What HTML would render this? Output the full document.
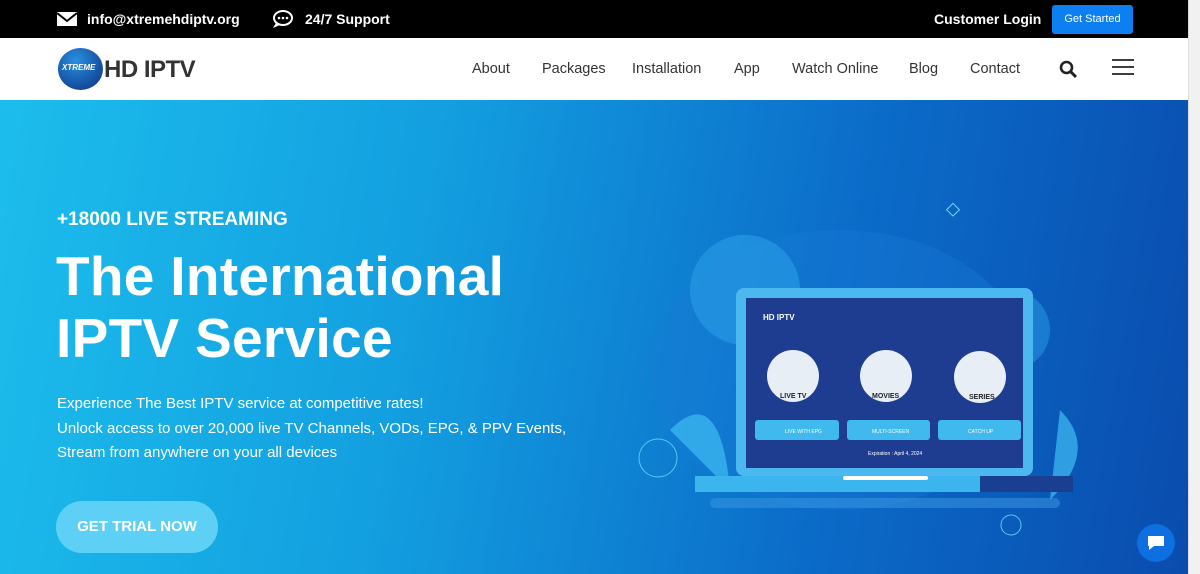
<!DOCTYPE html>
<html><head><style>
*{margin:0;padding:0;box-sizing:border-box}
body{width:1200px;height:574px;overflow:hidden;font-family:"Liberation Sans",sans-serif;position:relative;background:#fff}
.top{position:absolute;left:0;top:0;width:1188px;height:38px;background:#000;color:#fff;font-size:14px;font-weight:bold}
.nav{position:absolute;left:0;top:38px;width:1188px;height:62px;background:#fff}
.nav a{position:absolute;top:23px;font-size:14.5px;color:#333}
.hero{position:absolute;left:0;top:100px;width:1188px;height:474px;background:linear-gradient(100deg,#1cbdec 0%,#139fe0 35%,#0b6bc8 70%,#0a4cae 100%);color:#fff}
.sb{position:absolute;right:0;top:0;width:12px;height:574px;background:#f1f1f1;border-left:1px solid #ddd}
</style></head><body>
<div class="top">
<svg style="position:absolute;left:56px;top:11px" width="22" height="16"><rect x="1" y="1" width="20" height="14" fill="#fff"/><path d="M1 2 L11 10 L21 2" stroke="#000" stroke-width="2" fill="none"/></svg>
<span style="position:absolute;left:87px;top:11px">info@xtremehdiptv.org</span>
<svg style="position:absolute;left:271px;top:9px" width="24" height="20"><ellipse cx="12" cy="9" rx="9" ry="7" fill="none" stroke="#fff" stroke-width="2"/><path d="M5 14 L2 19 L9 16" fill="#fff"/><circle cx="8" cy="9" r="1.3" fill="#fff"/><circle cx="12" cy="9" r="1.3" fill="#fff"/><circle cx="16" cy="9" r="1.3" fill="#fff"/></svg>
<span style="position:absolute;left:305px;top:11px">24/7 Support</span>
<span style="position:absolute;left:934px;top:11px">Customer Login</span>
<div style="position:absolute;left:1052px;top:5px;width:81px;height:29px;background:#0d7ff0;border-radius:3px;font-size:11px;font-weight:normal;text-align:center;line-height:29px">Get Started</div>
</div>
<div class="nav">
<div style="position:absolute;left:58px;top:10px;width:45px;height:42px;border-radius:50%;background:radial-gradient(circle at 40% 30%,#2a8fe0,#0a2f80)"></div>
<span style="position:absolute;left:62px;top:25px;font-size:8px;color:#fff;font-style:italic;font-weight:bold">XTREME</span>
<span style="position:absolute;left:104px;top:18px;font-size:24px;font-weight:bold;color:#333;letter-spacing:-0.5px">HD IPTV</span>
<a style="left:472px">About</a><a style="left:542px">Packages</a><a style="left:632px">Installation</a><a style="left:734px">App</a><a style="left:792px">Watch Online</a><a style="left:909px">Blog</a><a style="left:970px">Contact</a>
<svg style="position:absolute;left:1059px;top:22px" width="19" height="19"><circle cx="7.5" cy="7.5" r="5.5" fill="none" stroke="#222" stroke-width="2.6"/><path d="M11.5 11.5 L17 17" stroke="#222" stroke-width="3"/></svg>
<svg style="position:absolute;left:1112px;top:21px" width="22" height="16"><path d="M0 1H22M0 8H22M0 15H22" stroke="#222" stroke-width="1.8"/></svg>
</div>
<div class="hero">
<div style="position:absolute;left:57px;top:109px;font-size:19px;font-weight:bold">+18000 LIVE STREAMING</div>
<div style="position:absolute;left:56px;top:145px;font-size:55px;font-weight:bold;line-height:62px;letter-spacing:0.3px">The International<br>IPTV Service</div>
<div style="position:absolute;left:57px;top:292px;font-size:15px;line-height:24.5px">Experience The Best IPTV service at competitive rates!<br>Unlock access to over 20,000 live TV Channels, VODs, EPG, &amp; PPV Events,<br>Stream from anywhere on your all devices</div>
<div style="position:absolute;left:56px;top:401px;width:162px;height:52px;border-radius:26px;background:#5fd0f5;font-size:15px;font-weight:bold;text-align:center;line-height:52px">GET TRIAL NOW</div>
<svg style="position:absolute;left:630px;top:80px" width="470" height="380">
<ellipse cx="210" cy="190" rx="190" ry="140" fill="#1a7bd6" opacity=".35"/>
<circle cx="115" cy="110" r="55" fill="#2a9ee6" opacity=".6"/>
<circle cx="380" cy="150" r="40" fill="#2a9ee6" opacity=".5"/>
<path d="M40 250 Q90 200 100 310 Z M430 230 Q470 270 420 320 Z" fill="#3fbdf2" opacity=".7"/>
<circle cx="28" cy="278" r="19" fill="none" stroke="#5ac8f0" stroke-width="1"/>
<circle cx="381" cy="345" r="10" fill="none" stroke="#5ac8f0" stroke-width="1"/>
<rect x="319" y="25" width="9" height="9" transform="rotate(45 323 29)" fill="none" stroke="#7ad6f6"/>
<rect x="106" y="108" width="297" height="188" rx="8" fill="#4cb8f0"/>
<rect x="116" y="118" width="277" height="170" fill="#1e3d90"/>
<text x="133" y="140" font-size="8" font-weight="bold" fill="#fff">HD IPTV</text>
<circle cx="163" cy="196" r="26" fill="#e8eef5"/><circle cx="256" cy="196" r="26" fill="#e8eef5"/><circle cx="350" cy="197" r="26" fill="#e8eef5"/>
<text x="150" y="218" font-size="7" font-weight="bold" fill="#222">LIVE TV</text>
<text x="242" y="218" font-size="7" font-weight="bold" fill="#222">MOVIES</text>
<text x="339" y="219" font-size="7" font-weight="bold" fill="#222">SERIES</text>
<rect x="125" y="240" width="84" height="20" rx="3" fill="#3fb9ee"/><rect x="217" y="240" width="83" height="20" rx="3" fill="#3fb9ee"/><rect x="308" y="240" width="83" height="20" rx="3" fill="#3fb9ee"/>
<text x="155" y="253" font-size="5" fill="#fff">LIVE WITH EPG</text><text x="242" y="253" font-size="5" fill="#fff">MULTI-SCREEN</text><text x="338" y="253" font-size="5" fill="#fff">CATCH UP</text>
<text x="238" y="275" font-size="5" fill="#fff">Expiration : April 4, 2024</text>
<rect x="65" y="296" width="378" height="16" fill="#3cb4ee"/><rect x="350" y="296" width="93" height="16" fill="#1b3f90"/>
<rect x="213" y="296" width="85" height="4" rx="2" fill="#fff"/>
<rect x="80" y="318" width="350" height="10" rx="5" fill="#3b9ae4" opacity=".5"/>
</svg>
<div style="position:absolute;left:1137px;top:424px;width:38px;height:38px;border-radius:50%;background:#0d6fe0"></div>
<svg style="position:absolute;left:1146px;top:434px" width="20" height="18"><path d="M2 2H18V12H8L3 16V12H2Z" fill="#fff"/></svg>
</div>
<div class="sb"></div>
</body></html>
